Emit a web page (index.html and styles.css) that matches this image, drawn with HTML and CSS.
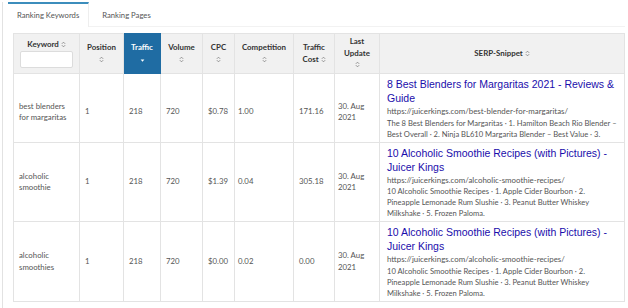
FILE: index.html
```html
<!DOCTYPE html>
<html lang="en">
<head>
<meta charset="utf-8">
<title>Ranking Keywords</title>
<link rel="stylesheet" href="styles.css">
</head>
<body>
<div class="frame">
  <div class="tabs">
    <div class="tab active">Ranking Keywords</div>
    <div class="tab">Ranking Pages</div>
  </div>
  <div class="pane">
    <table class="kw">
      <colgroup>
        <col class="c-kw"><col class="c-pos"><col class="c-tr"><col class="c-vol"><col class="c-cpc"><col class="c-comp"><col class="c-tc"><col class="c-lu"><col class="c-serp">
      </colgroup>
      <thead>
        <tr>
          <th class="th-kw"><span class="lbl">Keyword <svg class="sort" viewBox="0 0 6 8" width="5" height="7"><path d="M1 3.2 L3 1.2 L5 3.2 M1 4.8 L3 6.8 L5 4.8"/></svg></span><input class="kw-filter" type="text"></th>
          <th>Position<br><svg class="sort" viewBox="0 0 6 8" width="5" height="7"><path d="M1 3.2 L3 1.2 L5 3.2 M1 4.8 L3 6.8 L5 4.8"/></svg></th>
          <th class="th-active">Traffic<br><svg class="caret" viewBox="0 0 6 4" width="5" height="3"><path d="M0.5 0.5 L5.5 0.5 L3 3.5 Z"/></svg></th>
          <th>Volume<br><svg class="sort" viewBox="0 0 6 8" width="5" height="7"><path d="M1 3.2 L3 1.2 L5 3.2 M1 4.8 L3 6.8 L5 4.8"/></svg></th>
          <th>CPC<br><svg class="sort" viewBox="0 0 6 8" width="5" height="7"><path d="M1 3.2 L3 1.2 L5 3.2 M1 4.8 L3 6.8 L5 4.8"/></svg></th>
          <th>Competition<br><svg class="sort" viewBox="0 0 6 8" width="5" height="7"><path d="M1 3.2 L3 1.2 L5 3.2 M1 4.8 L3 6.8 L5 4.8"/></svg></th>
          <th>Traffic<br>Cost <svg class="sort" viewBox="0 0 6 8" width="5" height="7"><path d="M1 3.2 L3 1.2 L5 3.2 M1 4.8 L3 6.8 L5 4.8"/></svg></th>
          <th>Last<br>Update<br><svg class="sort" viewBox="0 0 6 8" width="5" height="7"><path d="M1 3.2 L3 1.2 L5 3.2 M1 4.8 L3 6.8 L5 4.8"/></svg></th>
          <th>SERP-Snippet <svg class="sort" viewBox="0 0 6 8" width="5" height="7"><path d="M1 3.2 L3 1.2 L5 3.2 M1 4.8 L3 6.8 L5 4.8"/></svg></th>
        </tr>
      </thead>
      <tbody>
        <tr class="row-first">
          <td>best blenders for margaritas</td>
          <td>1</td>
          <td>218</td>
          <td>720</td>
          <td>$0.78</td>
          <td class="tight">1.00</td>
          <td>171.16</td>
          <td class="tight">30. Aug 2021</td>
          <td class="serp">
            <a class="serp-title" href="#">8 Best Blenders for Margaritas 2021 - Reviews &amp; Guide</a>
            <div class="serp-url">https://juicerkings.com/best-blender-for-margaritas/</div>
            <div class="serp-desc">The 8 Best Blenders for Margaritas · 1. Hamilton Beach Rio Blender – Best Overall · 2. Ninja BL610 Margarita Blender – Best Value · 3.</div>
          </td>
        </tr>
        <tr>
          <td>alcoholic smoothie</td>
          <td>1</td>
          <td>218</td>
          <td>720</td>
          <td>$1.39</td>
          <td class="tight">0.04</td>
          <td>305.18</td>
          <td class="tight">30. Aug 2021</td>
          <td class="serp">
            <a class="serp-title" href="#">10 Alcoholic Smoothie Recipes (with Pictures) - Juicer Kings</a>
            <div class="serp-url">https://juicerkings.com/alcoholic-smoothie-recipes/</div>
            <div class="serp-desc">10 Alcoholic Smoothie Recipes · 1. Apple Cider Bourbon · 2. Pineapple Lemonade Rum Slushie · 3. Peanut Butter Whiskey Milkshake · 5. Frozen Paloma.</div>
          </td>
        </tr>
        <tr>
          <td>alcoholic smoothies</td>
          <td>1</td>
          <td>218</td>
          <td>720</td>
          <td>$0.00</td>
          <td class="tight">0.02</td>
          <td>0.00</td>
          <td class="tight">30. Aug 2021</td>
          <td class="serp">
            <a class="serp-title" href="#">10 Alcoholic Smoothie Recipes (with Pictures) - Juicer Kings</a>
            <div class="serp-url">https://juicerkings.com/alcoholic-smoothie-recipes/</div>
            <div class="serp-desc">10 Alcoholic Smoothie Recipes · 1. Apple Cider Bourbon · 2. Pineapple Lemonade Rum Slushie · 3. Peanut Butter Whiskey Milkshake · 5. Frozen Paloma.</div>
          </td>
        </tr>
      </tbody>
    </table>
  </div>
</div>
</body>
</html>
```

FILE: styles.css
```css
html, body {
  margin: 0;
  padding: 0;
  background: #fff;
}
body {
  font-family: Lato, "Open Sans", sans-serif;
  color: #444;
}
.frame {
  margin-left: 2px;
  border-left: 1px solid #e2e2e2;
  padding: 0 3px 0 5px;
  min-height: 308px;
  box-sizing: border-box;
}
.tabs {
  display: flex;
  margin-top: 2px;
  border-bottom: 1px solid #f2f2f2;
}
.tab {
  font-size: 7.7px;
  line-height: 22px;
  padding: 2px 9px 0;
  color: #555;
}
.tab.active {
  border-top: 2px solid #3c8dbc;
  border-right: 1px solid #eeeeee;
  padding-top: 0;
  background: #fff;
  margin-bottom: -1px;
}
.tab + .tab {
  padding-left: 13px;
}
.pane {
  padding: 6px 0 0 5px;
}
.kw {
  width: 611px;
  table-layout: fixed;
  border-collapse: collapse;
  border: 1px solid #e3e3e3;
}
.c-kw { width: 66px; }
.c-pos { width: 44px; }
.c-tr { width: 37px; }
.c-vol { width: 42px; }
.c-cpc { width: 32px; }
.c-comp { width: 59px; }
.c-tc { width: 41px; }
.c-lu { width: 45px; }
.c-serp { width: 245px; }

.kw th {
  background: #f1f1f1;
  color: #333;
  font-size: 7.9px;
  font-weight: 700;
  line-height: 11.5px;
  height: 39px;
  padding: 0 3px;
  text-align: center;
  vertical-align: middle;
  border: 1px solid #e3e3e3;
}
.kw th.th-active {
  background: #1f6ca3;
  color: #fff;
  border-color: #1f6ca3;
}
.kw th.th-kw {
  padding: 0 6px;
}
.lbl {
  display: block;
  margin-bottom: 1px;
}
.kw-filter {
  display: block;
  box-sizing: border-box;
  width: 100%;
  height: 17px;
  margin: 0;
  border: 1px solid #dcdcdc;
  border-radius: 2px;
  background: #fff;
  padding: 0 3px;
}
.sort {
  vertical-align: -1px;
}
.sort path {
  fill: none;
  stroke: #777;
  stroke-width: 0.9;
}
.caret {
  vertical-align: 0;
}
.caret path {
  fill: #fff;
}
.kw td {
  font-size: 7.8px;
  line-height: 11.7px;
  color: #555;
  padding: 3px 5px 2px;
  vertical-align: middle;
  border: 1px solid #e3e3e3;
}
.kw td.tight {
  padding-left: 3px;
}
.kw tr.row-first td {
  padding-top: 11px;
}
.kw td.serp,
.kw tr.row-first td.serp {
  padding: 3px 7px 2px 7px;
}
.serp-title {
  display: block;
  font-family: "Liberation Sans", Arial, sans-serif;
  font-size: 10.5px;
  line-height: 14px;
  color: #1a0dab;
  text-decoration: none;
}
.serp-url {
  font-size: 7.9px;
  line-height: 12.5px;
  color: #555;
}
.serp-desc {
  font-size: 7.6px;
  line-height: 11px;
  color: #555;
}
```
